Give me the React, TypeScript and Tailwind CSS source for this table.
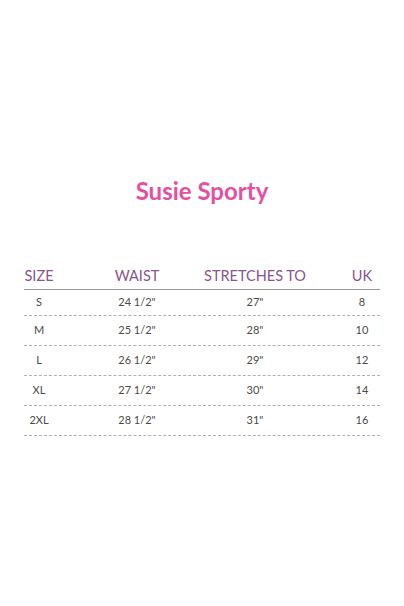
import React from "react";

const rows = [
  ["S", "24 1/2\"", "27\"", "8"],
  ["M", "25 1/2\"", "28\"", "10"],
  ["L", "26 1/2\"", "29\"", "12"],
  ["XL", "27 1/2\"", "30\"", "14"],
  ["2XL", "28 1/2\"", "31\"", "16"],
];

function Cell({ children }: { children: React.ReactNode }) {
  return <div className="flex justify-center whitespace-nowrap">{children}</div>;
}

function LastCell({ children }: { children: React.ReactNode }) {
  return (
    <div className="flex justify-end">
      <span className="w-[36px] text-center whitespace-nowrap">{children}</span>
    </div>
  );
}

export default function App() {
  return (
    <div
      className="w-[404px] h-[606px] bg-white pt-[177px]"
      style={{ fontFamily: "Lato, 'Open Sans', sans-serif" }}
    >
      <h1 className="text-center text-[24px] leading-[28px] font-bold text-[#e4509f]">
        Susie Sporty
      </h1>
      <div className="mx-[24px] mt-[57px] w-[356px]">
        <div className="grid h-[28px] grid-cols-[30px_166px_70px_1fr] items-center border-b border-[#9a9a9a] text-[14.5px] text-[#87568a]">
          <Cell>SIZE</Cell>
          <Cell>WAIST</Cell>
          <Cell>STRETCHES TO</Cell>
          <LastCell>UK</LastCell>
        </div>
        {rows.map((r, i) => (
          <div
            key={r[0]}
            className={`grid grid-cols-[30px_166px_70px_1fr] items-center border-b border-dashed border-[#b0b0b0] text-[11px] text-[#4a4a4a] ${
              i === 0 ? "h-[26px]" : "h-[30px]"
            }`}
          >
            <Cell>{r[0]}</Cell>
            <Cell>{r[1]}</Cell>
            <Cell>{r[2]}</Cell>
            <LastCell>{r[3]}</LastCell>
          </div>
        ))}
      </div>
    </div>
  );
}
